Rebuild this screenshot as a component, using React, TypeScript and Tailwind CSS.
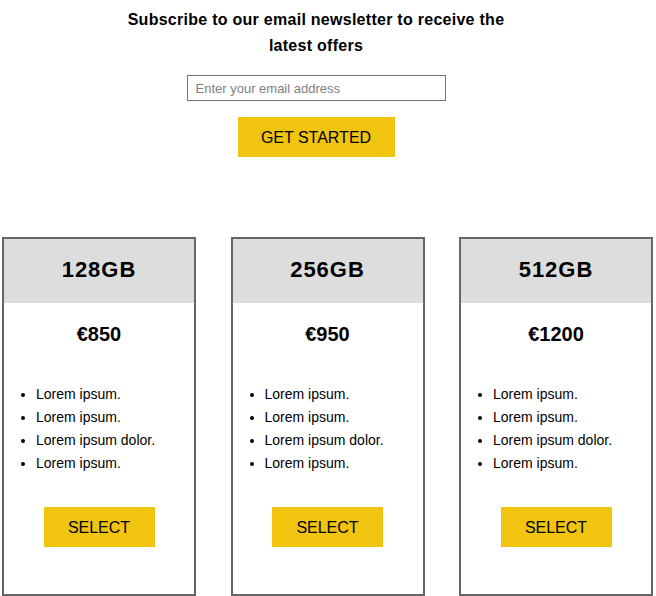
import React from "react"

const plans = [
  { size: "128GB", price: "€850" },
  { size: "256GB", price: "€950" },
  { size: "512GB", price: "€1200" },
]

const features = ["Lorem ipsum.", "Lorem ipsum.", "Lorem ipsum dolor.", "Lorem ipsum."]

function PlanCard({ size, price }: { size: string; price: string }) {
  return (
    <div className="w-[194px] h-[359px] border-2 border-[#666666] bg-white flex flex-col">
      <div className="h-[64px] pb-[2px] bg-[#dddddd] flex items-center justify-center">
        <h2 className="text-[22px] font-bold leading-none tracking-[1px]">{size}</h2>
      </div>
      <div className="mt-[19px] text-center text-[20px] font-bold leading-[24px]">{price}</div>
      <ul className="mt-[37px] list-disc pl-[32px] text-[14px] leading-[23px]">
        {features.map((f, i) => (
          <li key={i}>{f}</li>
        ))}
      </ul>
      <div className="mt-[32px] flex justify-center">
        <button className="w-[111px] h-[40px] pt-[2px] bg-[#f1c40f] text-[16px] text-black">SELECT</button>
      </div>
    </div>
  )
}

export default function App() {
  return (
    <div className="w-[656px] h-[596px] overflow-hidden bg-white text-black font-['Liberation_Sans',Arial,sans-serif]">
      <div className="w-[632px] pt-[7px] flex flex-col items-center text-center">
        <h1 className="max-w-[400px] text-[16px] font-bold leading-[26px] tracking-[0.27px]">
          Subscribe to our email newsletter to receive the latest offers
        </h1>
        <input
          type="email"
          placeholder="Enter your email address"
          className="mt-[16px] w-[259px] h-[26px] border border-[#767676] px-[8px] text-[13px] placeholder:text-[#808080] outline-none"
        />
        <button className="mt-[16px] w-[157px] h-[40px] pt-[2px] bg-[#f1c40f] text-[16px] text-black">
          GET STARTED
        </button>
      </div>
      <div className="mt-[80px] ml-[2px] w-[651px] flex justify-between">
        {plans.map((p) => (
          <PlanCard key={p.size} size={p.size} price={p.price} />
        ))}
      </div>
    </div>
  )
}
